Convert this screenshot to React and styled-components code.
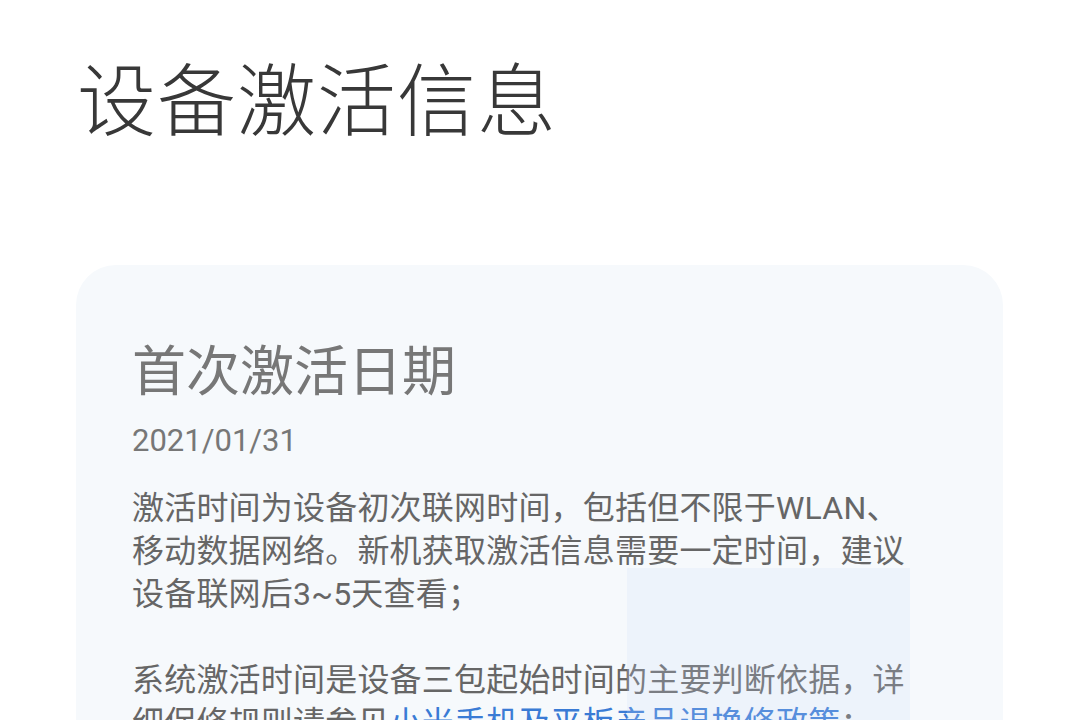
import React from "react";
import styled, { createGlobalStyle } from "styled-components";

const Global = createGlobalStyle`
  html, body {
    margin: 0;
    padding: 0;
    background: #ffffff;
    height: 720px;
    overflow: hidden;
  }
  body {
    font-family: Roboto, "Noto Sans CJK SC", sans-serif;
  }
`;

const Page = styled.div`
  display: flex;
  flex-direction: column;
  padding: 53px 77px 0 76px;
  width: 1080px;
  box-sizing: border-box;
`;

const Title = styled.h1`
  margin: 0 0 0 1px;
  font-size: 79px;
  line-height: 100px;
  font-weight: 300;
  color: #383838;
  letter-spacing: 1px;
`;

const Card = styled.section`
  position: relative;
  margin-top: 112px;
  width: 927px;
  min-height: 620px;
  box-sizing: border-box;
  padding: 78px 56px 40px 56px;
  background: #f6f9fc;
  border-radius: 40px;
  overflow: hidden;
`;

const Highlight = styled.div`
  position: absolute;
  left: 551px;
  top: 303px;
  width: 283px;
  bottom: 0;
  background: rgba(205, 218, 248, 0.2);
  pointer-events: none;
`;

const Subtitle = styled.h2`
  margin: 0;
  font-size: 54px;
  line-height: 60px;
  font-weight: 400;
  color: #777777;
`;

const DateText = styled.div`
  margin-top: 18px;
  font-size: 31px;
  line-height: 40px;
  color: #777777;
`;

const Body = styled.p`
  margin: 26px 0 0 0;
  font-size: 32px;
  line-height: 43px;
  color: #666666;
  white-space: nowrap;
  letter-spacing: 0.2px;
`;

const Link = styled.a`
  color: #3a7bd5;
  text-decoration: none;
`;

export default function App() {
  return (
    <>
      <Global />
      <Page>
        <Title>设备激活信息</Title>
        <Card>
          <Subtitle>首次激活日期</Subtitle>
          <DateText>2021/01/31</DateText>
          <Body>
            激活时间为设备初次联网时间，包括但不限于WLAN、
            <br />
            移动数据网络。新机获取激活信息需要一定时间，建议
            <br />
            设备联网后3~5天查看；
            <br />
            <br />
            系统激活时间是设备三包起始时间的主要判断依据，详
            <br />
            细保修规则请参见<Link href="#">小米手机及平板产品退换修政策</Link>；
          </Body>
          <Highlight />
        </Card>
      </Page>
    </>
  );
}
